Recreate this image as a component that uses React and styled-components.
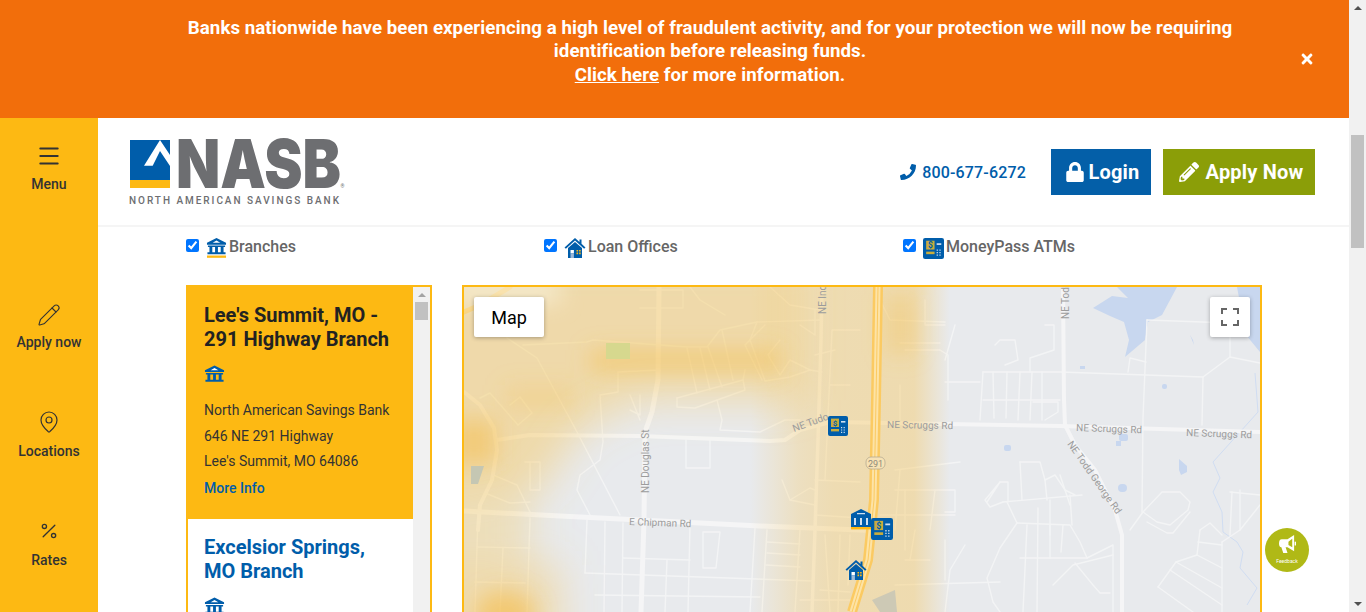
import React from 'react';
import styled, { createGlobalStyle } from 'styled-components';
import { Menu, Pencil, MapPin, Percent } from 'lucide-react';
import { FaPhoneAlt, FaLock, FaPencilAlt, FaTimes } from 'react-icons/fa';

const yellow = '#fdb913';
const blue = '#005daa';

const GlobalStyle = createGlobalStyle`
  html, body {
    margin: 0;
    height: 100%;
    overflow: hidden;
    font-family: Roboto, "Liberation Sans", sans-serif;
    background: #fff;
  }
`;

const Page = styled.div`
  display: flex;
  width: 1366px;
  height: 612px;
  overflow: hidden;
  position: relative;
`;

const Main = styled.div`
  flex: 1;
  min-width: 0;
  display: flex;
  flex-direction: column;
`;

const Track = styled.div`
  flex: none;
  width: 17px;
  height: ${(p) => (p.$inner ? '100%' : '612px')};
  background: #f1f1f1;
  display: flex;
  flex-direction: column;
  align-items: center;
`;

const ArrowUp = styled.div`
  width: 0;
  height: 0;
  margin-top: 6px;
  border-left: 4px solid transparent;
  border-right: 4px solid transparent;
  border-bottom: 4px solid ${(p) => (p.$inner ? '#a3a3a3' : '#505050')};
`;

const ArrowDown = styled.div`
  width: 0;
  height: 0;
  margin-top: auto;
  margin-bottom: 6px;
  border-left: 4px solid transparent;
  border-right: 4px solid transparent;
  border-top: 4px solid #505050;
`;

const Thumb = styled.div`
  width: 13px;
  height: ${(p) => p.$h}px;
  margin-top: ${(p) => p.$top}px;
  background: #c1c1c1;
`;

const Banner = styled.div`
  flex: none;
  height: 118px;
  box-sizing: border-box;
  background: #f26e0b;
  color: #fff;
  display: flex;
  align-items: flex-start;
  padding: 17px 30px 0 180px;
`;

const BannerText = styled.div`
  width: 1060px;
  text-align: center;
  font-size: 18.72px;
  font-weight: 700;
  line-height: 23.4px;
  letter-spacing: 0.05px;
  a {
    color: #fff;
    text-decoration: underline;
  }
`;

const BannerClose = styled.button`
  border: 0;
  background: none;
  color: #fff;
  padding: 0;
  width: 24px;
  margin: 34px 0 0 55px;
  font-size: 16px;
  display: flex;
  justify-content: center;
`;

const Body = styled.div`
  flex: 1;
  min-height: 0;
  display: flex;
`;

const Sidebar = styled.nav`
  flex: none;
  width: 98px;
  background: ${yellow};
  box-sizing: border-box;
  padding-top: 26px;
  display: flex;
  flex-direction: column;
`;

const SideItem = styled.a`
  flex: none;
  height: 109px;
  margin-bottom: ${(p) => (p.$first ? '50px' : '0')};
  display: flex;
  flex-direction: column;
  align-items: center;
  gap: ${(p) => (p.$first ? '6px' : '5px')};
  color: #333;
  font-size: 14px;
  font-weight: 500;
  line-height: 20px;
`;

const SideIcon = styled.span`
  width: 24px;
  height: 24px;
  display: flex;
  align-items: flex-start;
  justify-content: center;
  svg {
    flex: none;
    margin-top: ${(p) => p.$lift || 0}px;
  }
`;

const Content = styled.div`
  flex: 1;
  min-width: 0;
`;

const Header = styled.header`
  height: 109px;
  box-sizing: border-box;
  border-bottom: 2px solid #f5f5f5;
  display: flex;
  align-items: center;
  padding: 1px 34px 0 30px;
`;

const LogoSvg = styled.svg`
  display: block;
  flex: none;
`;

const HeaderRight = styled.div`
  margin-left: auto;
  display: flex;
  align-items: center;
`;

const Phone = styled.a`
  display: flex;
  align-items: center;
  gap: 6px;
  color: ${blue};
  font-size: 16px;
  font-weight: 500;
  letter-spacing: 0.17px;
  margin-right: 25px;
  svg {
    font-size: 16px;
    transform: scaleX(-1);
  }
`;

const HeadButton = styled.a`
  height: 46px;
  width: ${(p) => p.$w}px;
  margin-left: ${(p) => p.$ml || 0}px;
  box-sizing: border-box;
  padding-left: ${(p) => p.$pad}px;
  background: ${(p) => p.$bg};
  color: #fff;
  display: flex;
  align-items: center;
  justify-content: center;
  gap: ${(p) => p.$gap}px;
  font-size: 20px;
  font-weight: 700;
  letter-spacing: 0.2px;
`;

const Filters = styled.div`
  width: 1076px;
  margin-left: 88px;
  height: 58px;
  box-sizing: border-box;
  padding-top: 10px;
  display: grid;
  grid-template-columns: 358px 359px 359px;
`;

const FilterLabel = styled.label`
  display: flex;
  align-items: flex-start;
  color: #666;
  font-size: 16px;
  font-weight: 500;
  line-height: 20px;
  input {
    margin: 2px 7px 0 0;
    width: 13px;
    height: 13px;
  }
  svg {
    flex: none;
    margin-right: 2px;
    margin-top: 1px;
  }
`;

const Panels = styled.div`
  width: 1076px;
  margin-left: 88px;
  display: grid;
  grid-template-columns: 246px 800px;
  column-gap: 30px;
`;

const ListBox = styled.div`
  height: 400px;
  box-sizing: border-box;
  border: 2px solid ${yellow};
  display: flex;
  overflow: hidden;
`;

const List = styled.div`
  flex: 1;
  min-width: 0;
`;

const Branch = styled.article`
  height: ${(p) => (p.$active ? '232px' : 'auto')};
  box-sizing: border-box;
  padding: 16px 18px 0 16px;
  background: ${(p) => (p.$active ? yellow : '#fff')};
`;

const BranchTitle = styled.h3`
  margin: 0 0 14px;
  font-size: 20px;
  font-weight: 700;
  line-height: 24px;
  color: ${(p) => (p.$active ? '#222' : blue)};
`;

const BranchIcon = styled.div`
  height: 20px;
  margin-bottom: 13px;
`;

const AddressLine = styled.div`
  font-size: 14px;
  line-height: 25.5px;
  color: #333;
`;

const MoreInfo = styled.a`
  display: block;
  margin-top: 1px;
  font-size: 14px;
  font-weight: 500;
  line-height: 25px;
  color: ${blue};
`;

const MapBox = styled.div`
  position: relative;
  height: 400px;
  box-sizing: border-box;
  border: 2px solid ${yellow};
  overflow: hidden;
`;

const MapSvg = styled.svg`
  display: block;
  text {
    font-family: Roboto, sans-serif;
    font-size: 10px;
    fill: #9c9c9c;
  }
`;

const ShieldText = styled.text`
  && {
    font-size: 9px;
    fill: #8f8a7a;
  }
`;

const DollarText = styled.text`
  && {
    font-family: Roboto, sans-serif;
    font-size: 8px;
    font-weight: 700;
    fill: ${blue};
  }
`;

const MapControl = styled.button`
  position: absolute;
  top: 10px;
  ${(p) => (p.$right ? 'right: 10px;' : 'left: 10px;')}
  width: ${(p) => (p.$right ? '40px' : '70px')};
  height: 40px;
  padding: 0;
  border: 0;
  border-radius: 2px;
  background: #fff;
  box-shadow: 0 1px 4px rgba(0, 0, 0, 0.3);
  font-family: Roboto, sans-serif;
  font-size: 18px;
  color: #000;
  display: flex;
  align-items: center;
  justify-content: center;
`;

const Feedback = styled.a`
  position: absolute;
  left: 1265px;
  top: 528px;
  width: 44px;
  height: 44px;
  border-radius: 50%;
  background: #b0b916;
  color: #fff;
  display: flex;
  flex-direction: column;
  align-items: center;
  gap: 3px;
  padding-top: 7px;
  box-sizing: border-box;
  font-size: 5px;
  line-height: 6px;
  svg {
    flex: none;
  }
`;

const BankIcon = ({ underline }) => (
  <svg width="21" height={underline ? 20 : 18} viewBox={`0 0 22 ${underline ? 21 : 18}`}>
    <path fill={blue} d="M11 0 L21 5 V7 H1 V5 Z" />
    <path fill="#fff" d="M11 2.6 L15 5 H7 Z" />
    <path fill={blue} d="M2 8h18v1.4H2z M3.6 9.4h3v5.6h-3z M9.5 9.4h3v5.6h-3z M15.4 9.4h3v5.6h-3z M1.5 15h19v2h-19z" />
    {underline && <rect x="1" y="18.4" width="20" height="2.4" fill={yellow} />}
  </svg>
);

const HouseIcon = () => (
  <svg width="22" height="20" viewBox="0 0 21 20">
    <path fill={blue} d="M10.5 0 L15 4 V1.5 H17 V5.8 L21 9.6 L19.6 10.8 L10.5 2.6 L1.4 10.8 L0 9.6 Z" />
    <path fill={blue} d="M3.5 10 L10.5 4 L17.5 10 V20 H3.5 Z" />
    <rect x="6" y="12" width="3.4" height="3.4" fill="#fff" />
    <rect x="6" y="15.4" width="3.4" height="4.6" fill="#9db9d8" />
    <path fill={yellow} d="M12 12h1.6v1.6H12z M14.6 12h1.6v1.6h-1.6z M12 14.6h1.6v1.6H12z M14.6 14.6h1.6v1.6h-1.6z" />
  </svg>
);

const AtmIcon = ({ size = 20 }) => (
  <svg width={size} height={size} viewBox="0 0 20 20">
    <rect width="20" height="20" rx="2" fill={blue} />
    <rect x="3" y="2.6" width="8" height="8.4" fill="#c9ad3d" />
    <DollarText x="7" y="9.6" textAnchor="middle">$</DollarText>
    <rect x="3" y="13" width="8" height="2.4" fill="#c9ad3d" />
    <rect x="13" y="5" width="4.4" height="1.6" fill="#cfe0f0" />
    <path fill="#cfe0f0" d="M13 11h1.2v1.2H13z M15.6 11h1.2v1.2h-1.2z M13 13.4h1.2v1.2H13z M15.6 13.4h1.2v1.2h-1.2z M13 15.8h1.2V17H13z M15.6 15.8h1.2V17h-1.2z" />
  </svg>
);

const Logo = () => (
  <LogoSvg width="220" height="72" viewBox="128 136 220 72">
    <rect x="130" y="140" width="40" height="40" fill={blue} />
    <rect x="130" y="180" width="40" height="8" fill={yellow} />
    <path fill="#fff" d="M160 140 L144 165.7 H152.7 L160 151 L170 166 V155 Z" />
    <text x="176" y="187.6" textLength="165" lengthAdjust="spacingAndGlyphs" fontFamily="Inter, sans-serif" fontWeight="900" fontSize="67" fill="#6d6e71">NASB</text>
    <text x="340.5" y="188" fontFamily="Roboto, sans-serif" fontSize="5" fill="#6d6e71">®</text>
    <text x="129" y="204" textLength="210" fontFamily="Roboto, sans-serif" fontWeight="500" fontSize="10" fill="#6d6e71">NORTH AMERICAN SAVINGS BANK</text>
  </LogoSvg>
);

// road points are page coordinates, easier to compare with the screenshot
const mainRoads = [
  ['659,287 658,380 652,412 645,432 644,520 641,612', 5],
  ['497,440 530,435 640,436 770,441 785,440 800,430 830,422 890,423 1060,426 1260,432', 4],
  ['464,511 560,516 640,520 760,526 860,530 880,531', 5],
  ['822,287 821,340 818,440 815,530 812,612', 3.5],
  ['1063,287 1064,400 1065,425 1075,445 1095,470 1115,510 1122,535 1122,612', 4],
  ['464,392 480,405 494,428 497,450 492,480 480,505 478,530', 4],
];

const streets = [
  '523,345 587,342 593,340 687,347 707,347 720,330 757,322 822,320',
  '507,338 537,358 577,432 620,515',
  '618,372 618,392 600,395 603,442 600,460 580,475 577,490 590,515',
  '618,372 660,370',
  '677,398 743,380 745,370',
  '677,398 677,407 695,408 745,390 743,380',
  '687,348 697,393', '700,348 710,390', '708,347 722,387', '722,330 733,380',
  '757,322 750,340 765,381 790,377 810,370 822,372',
  '765,325 745,345 762,380', '780,340 768,355 780,375 790,360 810,370',
  '800,325 815,335 815,310', '690,287 700,300 725,315', '640,290 683,290 683,308 640,308',
  '770,287 790,305 820,310',
  '717,400 722,420 720,430 760,432 785,420 800,420',
  '686,440 686,468 710,468 710,440',
  '630,395 640,420', '630,410 640,415 640,395',
  '480,398 490,393 518,425', '510,405 520,397 532,413 518,425',
  '493,475 517,485 530,512', '485,493 510,503 530,502',
  '525,462 540,462 540,490 530,490 530,462',
  '477,547 530,548', '475,582 525,583', '478,515 475,612', '503,548 500,612', '530,518 527,612',
  '587,520 585,573', '605,522 604,612', '623,523 622,612', '667,560 665,612', '690,525 688,612',
  '703,532 720,532 716,568 703,568 703,532', '755,528 750,612', '767,530 762,612', '800,530 795,612',
  '767,542 800,544', '767,553 800,555', '766,565 800,567', '623,558 690,560',
  '585,573 813,581', '595,595 760,597', '800,600 860,600',
  '835,350 815,355', '830,385 850,385',
  '860,330 832,330 825,480', '825,535 830,612', '840,535 838,612', '850,535 848,585',
  '815,480 860,482', '815,515 860,518', '820,590 850,592', '790,500 810,488 815,490', '782,480 790,500 815,505',
];

const rightStreets = [
  '925,300 925,325 945,325', '900,343 940,343', '880,300 890,320 945,322',
  '905,350 940,350 948,355 948,400', '900,385 900,420', '955,325 945,360', '945,382 980,382',
  '983,372 1060,372 1203,377 1230,357 1260,363',
  '983,372 980,420', '993,372 994,418', '1007,372 1006,418', '1020,372 1018,420', '1032,372 1030,420', '1042,372 1042,420',
  '983,400 1060,400', '1033,402 1058,402 1058,412 1045,420',
  '995,345 1000,340 1015,340 1018,360 1005,365', '1045,325 1054,325 1054,350 1030,358 1030,372',
  '1147,320 1143,418 1142,512', '1147,320 1230,323 1230,357', '1203,377 1202,425',
  '1128,372 1130,358 1146,362',
  '1000,482 1008,482 1008,502', '987,502 1000,482 985,500 990,507 1003,502',
  '1020,462 1040,462 1045,480 1055,475 1065,490 1075,495',
  '1020,462 1022,500', '1045,480 1047,500', '1060,475 1070,505',
  '1003,502 1082,495', '1050,500 1050,535', '1070,495 1072,525', '1007,502 1017,523',
  '1017,523 1070,525 1080,542 1087,558 1113,545 1113,612',
  '1017,523 1000,548 987,578 993,602 1000,612',
  '1027,525 1023,612', '1038,508 1037,612', '1050,525 1050,558', '1063,525 1061,552',
  '1020,558 1050,558 1087,558',
  '1075,563 1093,585 1100,593 1110,593', '1053,585 1073,565 1113,555',
  '1143,512 1162,492 1180,492 1190,502 1188,510 1170,525 1157,522 1143,512',
  '1130,530 1143,512', '1147,522 1167,533 1173,533 1190,512',
  '1222,542 1222,612', '1198,542 1222,545', '1197,555 1222,568', '1176,562 1222,588', '1158,587 1193,612', '1170,570 1222,605',
  '1200,530 1197,555 1176,562 1158,587', '1200,530 1210,523 1222,535', '1222,542 1240,530 1260,505',
  '1230,492 1260,495', '1232,492 1230,535', '1240,490 1240,530',
  '895,470 960,462', '895,490 955,490 955,512 945,512', '900,470 895,530', '905,490 905,550',
  '880,515 955,515', '905,560 930,560', '915,530 910,560', '935,490 930,530',
  '895,585 1000,582', '945,540 945,580', '965,545 950,570 945,612',
];

const highway = '878,287 876,400 874,500 868,560 852,612';

const Roads = () => (
  <g fill="none" strokeLinejoin="round" strokeLinecap="round">
    {[...streets, ...rightStreets].map((d) => (
      <polyline key={d} points={d} stroke="#f3f4f5" strokeWidth="1.4" />
    ))}
    {mainRoads.map(([d, w]) => (
      <polyline key={d} points={d} stroke="#f5f5f6" strokeWidth={w} />
    ))}
    <polyline points="464,312 480,305 510,287" stroke="#fbdb93" strokeWidth="5" />
  </g>
);

const Highway = () => (
  <g fill="none" strokeLinejoin="round">
    <polyline points={highway} stroke="#fbca62" strokeWidth="10" />
    <polyline points={highway} stroke="#fde3a6" strokeWidth="5" />
    <polyline points={highway} stroke="#fbca62" strokeWidth="1" />
  </g>
);

const Water = () => (
  <g fill="#c8d7ef">
    <path d="M1117 287 L1128 298 L1112 296 L1093 308 L1110 316 L1124 322 L1129 340 L1125 357 L1145 340 L1148 322 L1162 315 L1177 287 Z" />
    <path d="M1237 287 H1260 V352 L1246 335 Z" />
    <path d="M1190 335 L1193 340 L1194 345 Z" />
    <rect x="1162" y="384" width="5" height="5" rx="2" />
    <rect x="1080" y="366" width="5" height="3" />
    <rect x="1004" y="445" width="7" height="6" rx="2" />
    <rect x="1119" y="434" width="9" height="7" rx="2" />
    <rect x="1116" y="441" width="5" height="5" />
    <path d="M1179 459 L1187 466 L1187 472 L1181 475 L1179 470 Z" />
    <rect x="1118" y="484" width="9" height="8" rx="4" />
    <polyline points="1255,373 1258,412 1213,462 1220,478 1213,492 1222,512 1223,532 1237,542 1243,552 1240,568 1257,588 1247,605" fill="none" stroke="#d0ddf2" strokeWidth="1" />
  </g>
);

const Heat = () => (
  <g>
    <defs>
      <filter id="wide" x="-30%" y="-30%" width="160%" height="160%">
        <feGaussianBlur stdDeviation="20" />
      </filter>
      <filter id="mid" x="-50%" y="-100%" width="200%" height="300%">
        <feGaussianBlur stdDeviation="11" />
      </filter>
      <linearGradient id="band" x1="750" x2="950" y1="0" y2="0" gradientUnits="userSpaceOnUse">
        <stop offset="0" stopColor="#f7c65a" stopOpacity="0" />
        <stop offset="0.24" stopColor="#f7c65a" stopOpacity="0.3" />
        <stop offset="0.42" stopColor="#f7c65a" stopOpacity="0.4" />
        <stop offset="0.82" stopColor="#f7c65a" stopOpacity="0.42" />
        <stop offset="1" stopColor="#f7c65a" stopOpacity="0" />
      </linearGradient>
    </defs>
    <rect x="750" y="287" width="200" height="400" fill="url(#band)" />
    <g filter="url(#wide)" fill="#f7c65a">
      <path d="M420 250 H800 V400 H640 L580 430 L540 490 L420 500 Z" fillOpacity="0.46" />
      <rect x="420" y="565" width="140" height="90" fillOpacity="0.42" />
      <rect x="420" y="490" width="110" height="80" fillOpacity="0.32" />
    </g>
    <g filter="url(#mid)" fill="#f5bd48">
      <rect x="590" y="350" width="190" height="22" fillOpacity="0.45" />
      <rect x="885" y="295" width="30" height="60" fillOpacity="0.3" />
      <rect x="452" y="420" width="44" height="44" fillOpacity="0.5" />
      <ellipse cx="505" cy="615" rx="30" ry="24" fillOpacity="0.6" />
      <rect x="505" y="385" width="70" height="25" fillOpacity="0.2" />
    </g>
    <g filter="url(#mid)" fill="#f8f2dc" fillOpacity="0.75">
      <rect x="450" y="280" width="110" height="22" />
    </g>
  </g>
);

const Patches = () => (
  <g>
    <rect x="606" y="343" width="24" height="16" fill="#d6d88e" />
    <path d="M872 600 L895 590 L897 612 H880 Z" fill="#cdc9b5" />
    <path d="M471 466 H484 L478 484 H471 Z" fill="#c5c7b3" />
  </g>
);

const Labels = () => (
  <g>
    <text x="887" y="428" transform="rotate(1 887 428)">NE Scruggs Rd</text>
    <text x="1076" y="431" transform="rotate(2 1076 431)">NE Scruggs Rd</text>
    <text x="1186" y="436" transform="rotate(2 1186 436)">NE Scruggs Rd</text>
    <text x="1067" y="444" transform="rotate(55 1067 444)">NE Todd George Rd</text>
    <text x="1069" y="319" transform="rotate(-90 1069 319)">NE Todd</text>
    <text x="826" y="314" transform="rotate(-90 826 314)">NE Ind</text>
    <text x="649" y="493" transform="rotate(-90 649 493)">NE Douglas St</text>
    <text x="629" y="525" transform="rotate(2 629 525)">E Chipman Rd</text>
    <text x="794" y="432" transform="rotate(-20 794 432)">NE Tudo</text>
    <rect x="866" y="457" width="19" height="12" rx="5" fill="#f7e2b4" stroke="#b5ab93" strokeWidth="0.8" />
    <ShieldText x="875.5" y="466.5" textAnchor="middle">291</ShieldText>
  </g>
);

const Marker = ({ x, y, children }) => <g transform={`translate(${x} ${y})`}>{children}</g>;

const BranchMarker = () => (
  <g>
    <path fill={blue} d="M10 0 L20 5 V7 H0 V5 Z" />
    <path fill={blue} d="M0 7h20v11H0z" />
    <path fill="#cfe0f0" d="M3 9h2v7H3z M9 9h2v7H9z M15 9h2v7h-2z M6 4h8v1.2H6z" />
    <rect y="18" width="20" height="2.4" fill={yellow} />
  </g>
);

const MapCanvas = () => (
  <MapSvg width="796" height="396" viewBox="464 287 796 396">
    <rect x="464" y="287" width="796" height="396" fill="#e8eaed" />
    <Water />
    <Roads />
    <Heat />
    <Patches />
    <Highway />
    <Labels />
    <Marker x="828" y="416"><AtmIcon /></Marker>
    <Marker x="851" y="509"><BranchMarker /></Marker>
    <Marker x="871" y="518"><AtmIcon size={22} /></Marker>
    <Marker x="845" y="560"><HouseIcon /></Marker>
  </MapSvg>
);

const FullscreenIcon = () => (
  <svg width="18" height="18" viewBox="0 0 18 18" fill="none" stroke="#666" strokeWidth="2">
    <path d="M1 6V1h5 M12 1h5v5 M17 12v5h-5 M6 17H1v-5" />
  </svg>
);

const Megaphone = () => (
  <svg width="17" height="20" viewBox="0 0 18 21" fill="#fff">
    <path d="M16 0 V17 L9 13 H7 L9 19 H4.5 L2.5 13 C0.8 13 0 11.5 0 9 C0 6 1 4.5 3 4.5 H9 Z" />
    <path d="M14 4 L10 7 V10.5 L14 13 Z" fill="#b0b916" />
    <rect x="16.5" y="7" width="1.5" height="4" />
  </svg>
);

const sideItems = [
  { label: 'Menu', icon: <Menu size={26} strokeWidth={1.9} />, first: true, lift: -1 },
  { label: 'Apply now', icon: <Pencil size={24} strokeWidth={1.1} /> },
  { label: 'Locations', icon: <MapPin size={24} strokeWidth={1.2} />, lift: -2 },
  { label: 'Rates', icon: <Percent size={20} strokeWidth={1.6} /> },
];

const App = () => (
  <Page>
    <GlobalStyle />
    <Main>
      <Banner>
        <BannerText>
          Banks nationwide have been experiencing a high level of fraudulent activity, and for your protection we will now be requiring identification before releasing funds.
          <br />
          <a href="#click">Click here</a> for more information.
        </BannerText>
        <BannerClose aria-label="Close"><FaTimes /></BannerClose>
      </Banner>
      <Body>
        <Sidebar>
          {sideItems.map((item) => (
            <SideItem key={item.label} $first={item.first}>
              <SideIcon $lift={item.lift}>{item.icon}</SideIcon>
              {item.label}
            </SideItem>
          ))}
        </Sidebar>
        <Content>
          <Header>
            <Logo />
            <HeaderRight>
              <Phone><FaPhoneAlt />800-677-6272</Phone>
              <HeadButton $w={100} $pad={3} $bg="#045fa8" $gap={3}><FaLock />Login</HeadButton>
              <HeadButton $w={152} $pad={4} $ml={12} $bg="#8b9e08" $gap={7}><FaPencilAlt />Apply Now</HeadButton>
            </HeaderRight>
          </Header>
          <Filters>
            <FilterLabel><input type="checkbox" defaultChecked /><BankIcon underline />Branches</FilterLabel>
            <FilterLabel><input type="checkbox" defaultChecked /><HouseIcon />Loan Offices</FilterLabel>
            <FilterLabel><input type="checkbox" defaultChecked /><AtmIcon size={21} />MoneyPass ATMs</FilterLabel>
          </Filters>
          <Panels>
            <ListBox>
              <List>
                <Branch $active>
                  <BranchTitle $active>Lee's Summit, MO - 291 Highway Branch</BranchTitle>
                  <BranchIcon><BankIcon /></BranchIcon>
                  <AddressLine>North American Savings Bank</AddressLine>
                  <AddressLine>646 NE 291 Highway</AddressLine>
                  <AddressLine>Lee's Summit, MO 64086</AddressLine>
                  <MoreInfo>More Info</MoreInfo>
                </Branch>
                <Branch>
                  <BranchTitle>Excelsior Springs, MO Branch</BranchTitle>
                  <BranchIcon><BankIcon /></BranchIcon>
                </Branch>
              </List>
              <Track $inner>
                <ArrowUp $inner />
                <Thumb $top={5} $h={18} />
              </Track>
            </ListBox>
            <MapBox>
              <MapCanvas />
              <MapControl>Map</MapControl>
              <MapControl $right aria-label="Fullscreen"><FullscreenIcon /></MapControl>
            </MapBox>
          </Panels>
        </Content>
      </Body>
    </Main>
    <Track>
      <ArrowUp />
      <Thumb $top={125} $h={113} />
      <ArrowDown />
    </Track>
    <Feedback>
      <Megaphone />
      Feedback
    </Feedback>
  </Page>
);

export default App;
